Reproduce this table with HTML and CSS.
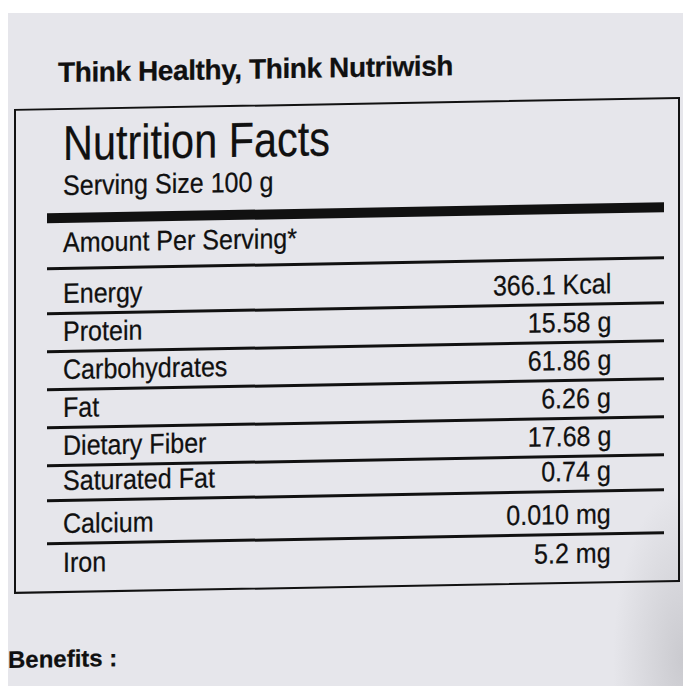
FILE: index.html
```html
<!DOCTYPE html>
<html lang="en">
<head>
<meta charset="utf-8">
<title>Nutrition Facts</title>
<link rel="stylesheet" href="styles.css">
</head>
<body>
<div class="paper">
  <div class="sheet">
    <h1 class="tagline">Think Healthy, Think Nutriwish</h1>
    <section class="label">
      <h2 class="label-title"><span class="narrow title-text">Nutrition Facts</span></h2>
      <p class="serving"><span class="narrow">Serving Size 100 g</span></p>
      <div class="bar"></div>
      <p class="amount"><span class="narrow">Amount Per Serving*</span></p>
      <div class="facts">
        <div class="row"><span class="narrow">Energy</span><span class="narrow value">366.1 Kcal</span></div>
        <div class="row"><span class="narrow">Protein</span><span class="narrow value">15.58 g</span></div>
        <div class="row"><span class="narrow">Carbohydrates</span><span class="narrow value">61.86 g</span></div>
        <div class="row"><span class="narrow">Fat</span><span class="narrow value">6.26 g</span></div>
        <div class="row"><span class="narrow">Dietary Fiber</span><span class="narrow value">17.68 g</span></div>
        <div class="row"><span class="narrow">Saturated Fat</span><span class="narrow value">0.74 g</span></div>
        <div class="row"><span class="narrow">Calcium</span><span class="narrow value">0.010 mg</span></div>
        <div class="row"><span class="narrow">Iron</span><span class="narrow value">5.2 mg</span></div>
      </div>
    </section>
    <p class="benefits">Benefits :</p>
  </div>
</div>
</body>
</html>
```
FILE: styles.css
```css
* {
  box-sizing: border-box;
  margin: 0;
}

body {
  margin: 0;
  background: #ffffff;
}

.paper {
  margin: 13px 0 0 8px;
  width: 675px;
  height: 673px;
  background: radial-gradient(ellipse 70px 170px at 100% 96%, #cacacf 0%, #e6e6eb 100%) no-repeat, #e6e6eb;
  overflow: hidden;
}

.sheet {
  height: 100%;
  padding-top: 39px;
  transform: skewY(-1.02deg);
  transform-origin: 50% 50%;
  color: #101010;
  -webkit-text-stroke: 0.25px #101010;
}

.tagline {
  margin-left: 50px;
  font: bold 28px/32px "Liberation Sans", Arial, sans-serif;
  letter-spacing: -0.4px;
}

.label {
  margin: 18.5px 0 0 6px;
  width: 666px;
  height: 485px;
  border: 2px solid #121212;
  padding: 8.7px 14px 0 31px;
  font-family: "Liberation Sans", Arial, sans-serif;
}

.narrow {
  display: inline-block;
  white-space: nowrap;
  transform: scaleX(0.895);
  transform-origin: left bottom;
}

.narrow.value {
  transform-origin: right bottom;
}

.label-title {
  padding-left: 16px;
  font-size: 49px;
  line-height: 50px;
  font-weight: normal;
}

.title-text {
  transform: scaleX(0.845);
}

.serving,
.amount,
.row {
  font-size: 28px;
  line-height: 30px;
}

.serving {
  margin-top: 3.25px;
  padding-left: 16px;
}

.bar {
  margin-top: 11.5px;
  height: 10.5px;
  background: #111111;
}

.amount {
  margin-top: 5px;
  padding: 0 0 8.5px 16px;
  border-bottom: 3px solid #111111;
}

.facts {
  display: grid;
  grid-template-rows: 44.8px 38.5px 38px 38px 37.5px 35.5px 43px 45.5px;
}

.row {
  display: flex;
  justify-content: space-between;
  align-items: flex-end;
  padding: 0 53px 3px 16px;
  border-bottom: 3px solid #111111;
}

.row:last-child {
  border-bottom: none;
  padding-bottom: 12.4px;
}

.benefits {
  margin-top: 52px;
  font: bold 24px/28px "Liberation Sans", Arial, sans-serif;
}
```
